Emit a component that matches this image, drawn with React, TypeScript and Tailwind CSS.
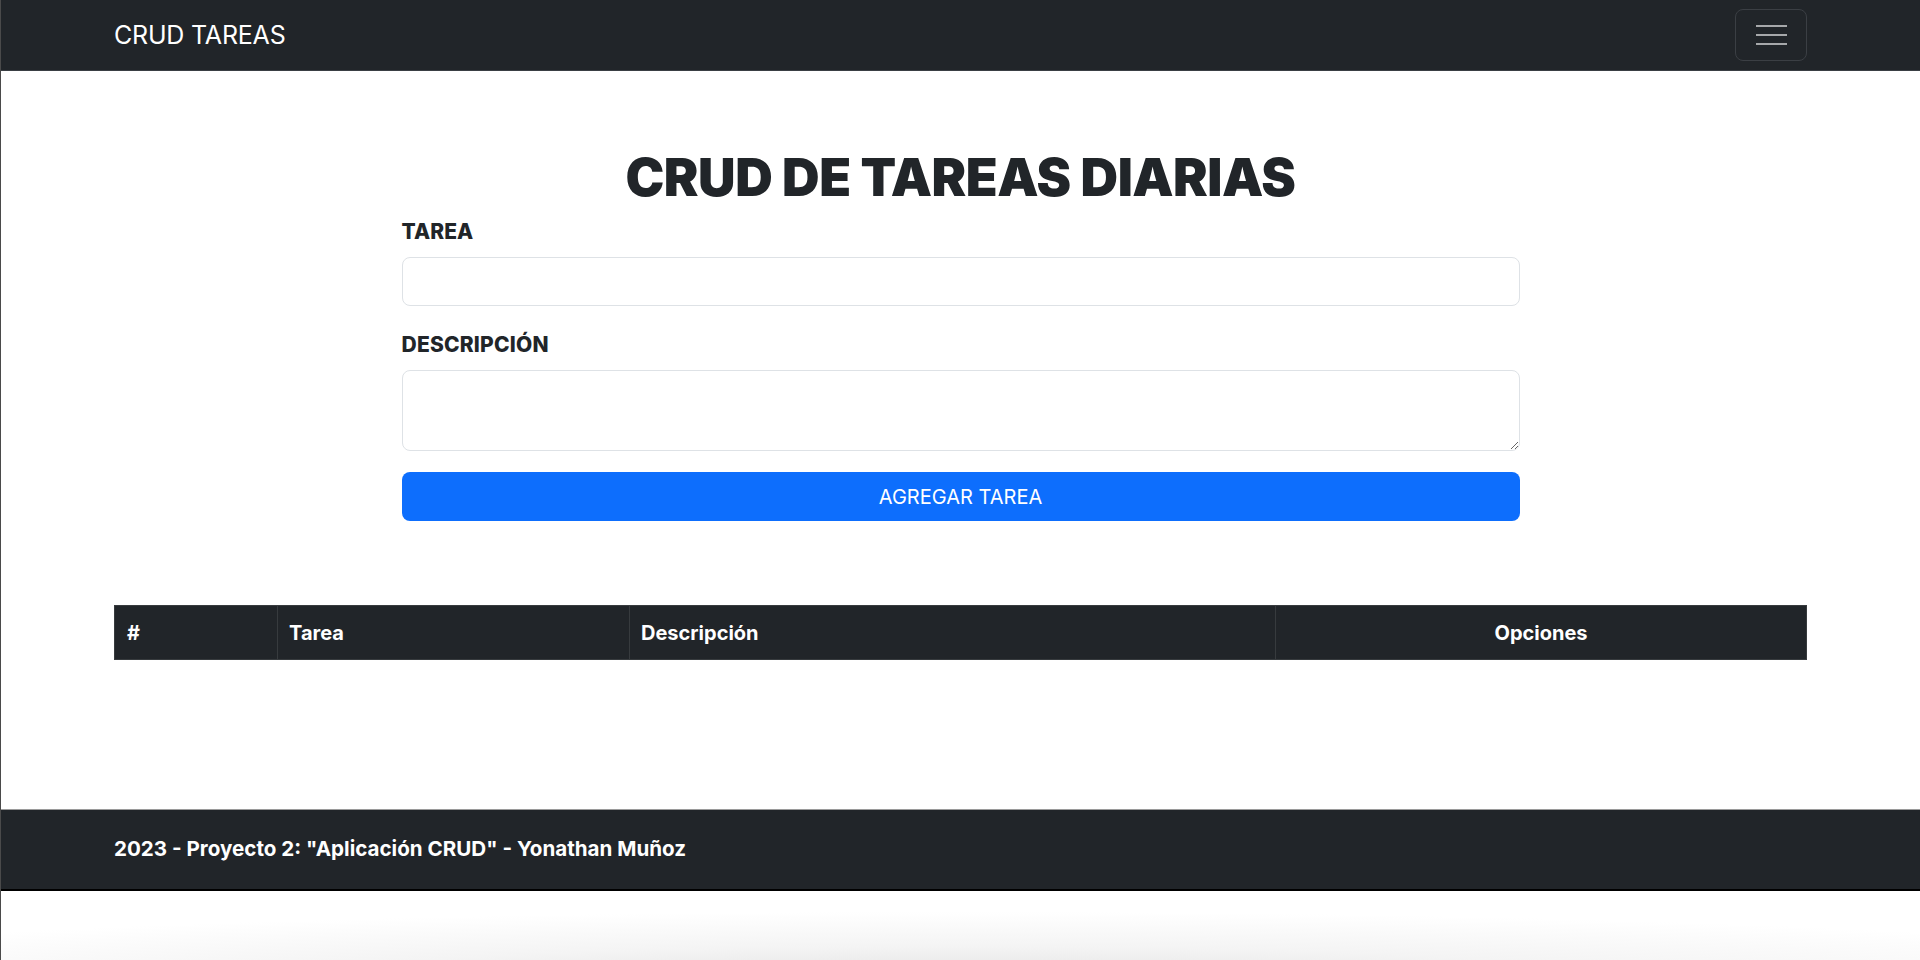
import React from "react";

export default function App() {
  return (
    <div
      className="w-[1920px] h-[960px] flex flex-col bg-white overflow-hidden border-l border-[#4a4a4a]"
      style={{ fontFamily: "Inter, 'Noto Sans', sans-serif" }}
    >
      {/* Navbar */}
      <nav className="h-[71px] shrink-0 bg-[#212529] border-b border-[#3a3f44] flex items-center justify-between pl-[113px] pr-[113px]">
        <span className="text-white text-[25px] leading-none tracking-[-0.2px]">CRUD TAREAS</span>
        <button className="w-[72px] h-[52px] rounded-[8px] border border-[#3b3f44] flex flex-col items-center justify-center gap-[7px]">
          <span className="block w-[31px] h-[2px] bg-[#a6a8aa]" />
          <span className="block w-[31px] h-[2px] bg-[#a6a8aa]" />
          <span className="block w-[31px] h-[2px] bg-[#a6a8aa]" />
        </button>
      </nav>

      {/* Main */}
      <main className="flex-1 flex flex-col">
        <div className="w-[1118px] mx-auto flex flex-col pt-[75px]">
          <h1 className="text-center text-[52px] leading-[64px] font-black text-[#212529] tracking-[-0.5px]">
            CRUD DE TAREAS DIARIAS
          </h1>
          <label className="mt-[7px] text-[21px] leading-[30px] font-extrabold text-[#212529] tracking-[0.1px]">TAREA</label>
          <input
            type="text"
            className="mt-[10px] h-[49px] w-full rounded-[8px] border border-[#dee2e6] outline-none"
          />
          <label className="mt-[24px] text-[21px] leading-[30px] font-extrabold text-[#212529] tracking-[0.2px]">DESCRIPCIÓN</label>
          <textarea className="mt-[10px] h-[81px] w-full rounded-[8px] border border-[#dee2e6] outline-none resize-y" />
          <button className="mt-[21px] h-[49px] w-full rounded-[8px] bg-[#0d6efd] text-white text-[20px] leading-none">
            AGREGAR TAREA
          </button>
        </div>

        <div className="mt-[84px] mx-[113px]">
          <table className="w-full border-collapse text-white">
            <thead>
              <tr className="h-[54px] bg-[#212529] text-[20px] font-bold">
                <th className="w-[163px] text-left px-[12px] border border-[#373b3e]">#</th>
                <th className="w-[352px] text-left px-[11px] border border-[#373b3e]">Tarea</th>
                <th className="w-[646px] text-left px-[11px] border border-[#373b3e]">Descripción</th>
                <th className="text-center px-[11px] border border-[#373b3e]">Opciones</th>
              </tr>
            </thead>
          </table>
        </div>
      </main>

      {/* Footer */}
      <footer className="h-[82px] shrink-0 bg-[#212529] border-t border-[#9a9a9a] border-b-2 border-b-black flex items-center pl-[113px]">
        <span className="text-white text-[20.6px] font-bold">
          2023 - Proyecto 2: "Aplicación CRUD" - Yonathan Muñoz
        </span>
      </footer>

      {/* Bottom shadow area */}
      <div className="h-[69px] shrink-0 bg-[radial-gradient(ellipse_70%_100%_at_50%_130%,#e2e2e2_0%,#f4f4f4_50%,#ffffff_100%)]" />
    </div>
  );
}
